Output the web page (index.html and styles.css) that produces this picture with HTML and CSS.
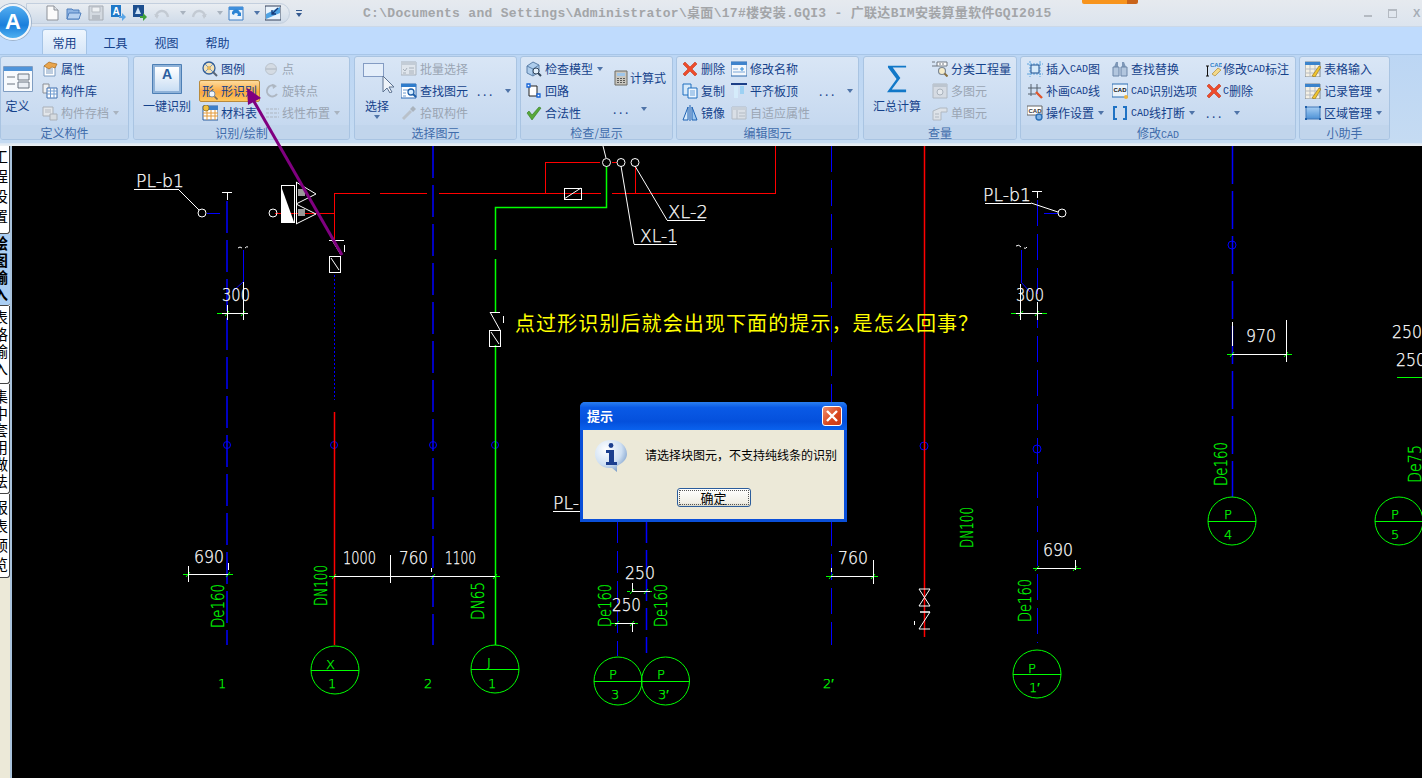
FILE: index.html
```html
<!DOCTYPE html>
<html lang="zh-CN">
<head>
  <meta charset="UTF-8">
  <title>广联达BIM安装算量软件GQI2015</title>
  <link rel="stylesheet" href="styles.css">
</head>
<body>

<!-- shared toolbar icons -->
<svg class="defs" width="0" height="0">
  <defs>
    <linearGradient id="gBlue" x1="0" y1="0" x2="0" y2="1"><stop offset="0" stop-color="#9ccbf5"/><stop offset="1" stop-color="#2f7fd0"/></linearGradient>
    <linearGradient id="gWin" x1="0" y1="0" x2="0" y2="1"><stop offset="0" stop-color="#ffffff"/><stop offset="1" stop-color="#c9def4"/></linearGradient>
    <symbol id="i-new" viewBox="0 0 16 16"><path d="M3 1h7l4 4v10H3z" fill="#fbfbfb" stroke="#8d9198"/><path d="M10 1v4h4" fill="#dfe3e8" stroke="#8d9198"/></symbol>
    <symbol id="i-open" viewBox="0 0 16 16"><path d="M1 4h5l1 1h6v9H1z" fill="#8fb4e3" stroke="#4f7fbd"/><path d="M1 14l2-6h12l-2 6z" fill="#b6d0f0" stroke="#4f7fbd"/></symbol>
    <symbol id="i-save" viewBox="0 0 16 16"><path d="M1 1h14v14H1z" fill="#d3d9e0" stroke="#a5abb3"/><path d="M4 2h8v5H4z" fill="#eef1f4" stroke="#b5bac1"/><path d="M4 10h8v5H4z" fill="#b8bec6"/></symbol>
    <symbol id="i-aout" viewBox="0 0 16 16"><path d="M1 0h10v12H1z" fill="#1f78c8"/><text x="2.500" y="10" class="ic-t ic-a">A</text><path d="M9 11h3V8l4 4-4 4v-3H9z" fill="#5aa5e6"/></symbol>
    <symbol id="i-ain" viewBox="0 0 16 16"><path d="M1 0h11v12H1z" fill="#1d4f8f"/><path d="M6 2l3 7H3z" fill="#cfe3f6"/><path d="M8 11h3V8l4 4-4 4v-3H8z" fill="#3fa03a"/></symbol>
    <symbol id="i-undo" viewBox="0 0 16 16"><path d="M2 12C2 5 12 3 14 12" fill="none" stroke="#c3cad3" stroke-width="2.400"/><path d="M0 9l5 1-2 4z" fill="#c3cad3"/></symbol>
    <symbol id="i-redo" viewBox="0 0 16 16"><path d="M14 12C14 5 4 3 2 12" fill="none" stroke="#c3cad3" stroke-width="2.400"/><path d="M16 9l-5 1 2 4z" fill="#c3cad3"/></symbol>
    <symbol id="i-sync" viewBox="0 0 16 16"><path d="M1 2h14v13H1z" fill="#eaf2fb" stroke="#3f7fc4"/><path d="M1 2h14v3H1z" fill="#3f8fdc"/><path d="M4 9a4 4 0 0 1 8-1l1-1v4H9l1-1a2 2 0 0 0-4 0z" fill="#2a83d4"/></symbol>
    <symbol id="i-fit" viewBox="0 0 16 16"><path d="M0 1h16v14H0z" fill="#e9f3fc" stroke="#33415a"/><path d="M1 9L15 2v6L1 14z" fill="#4fa3e3"/><path d="M13 3L7 9M7 5v4h4" fill="none" stroke="#153a78" stroke-width="1.300"/></symbol>

    <symbol id="i-prop" viewBox="0 0 16 16"><path d="M2 5h11v10H2z" fill="#fff" stroke="#7d9cc1"/><path d="M4 8h7M4 10h7M4 12h7" stroke="#7d9cc1"/><path d="M2 5l5-4 3 1 5 1-2 4-3-1-3 2z" fill="#e9a54d" stroke="#a86a1c" stroke-width=".7"/></symbol>
    <symbol id="i-lib" viewBox="0 0 16 16"><path d="M1 1h6v9H1z" fill="#eef0f2" stroke="#8a8f96"/><path d="M5 5h10v10H5z" fill="#fff" stroke="#3e6fae"/><path d="M5 8h10M5 11h10M8.500 5v10M12 5v10" stroke="#6f9bd0"/></symbol>
    <symbol id="i-store" viewBox="0 0 16 16"><path d="M1 2h10v9H1z" fill="#e2e6ea" stroke="#a9afb7"/><path d="M3 5h6M3 7h6" stroke="#b5bac2"/><path d="M8 9h7v6H8z" fill="#d6dbe0" stroke="#a9afb7"/></symbol>
    <symbol id="i-legend" viewBox="0 0 16 16"><circle cx="7" cy="7" r="6" fill="#f3e2b8" stroke="#315d98" stroke-width="1.300"/><path d="M3 3l8 8M11 3l-8 8" stroke="#6f94c4"/><circle cx="7" cy="7" r="2" fill="#e7b65c"/><path d="M11 11l4 4" stroke="#5a6676" stroke-width="2"/></symbol>
    <symbol id="i-mag" viewBox="0 0 10 10"><circle cx="4" cy="4" r="3" fill="#eef4fa" stroke="#7a8ea5"/><path d="M6.500 6.500L9.500 9.500" stroke="#7a6a55" stroke-width="1.600"/></symbol>
    <symbol id="i-table" viewBox="0 0 16 16"><path d="M1 1h15v14H1z" fill="#fff" stroke="#2d5f9e"/><path d="M1 1h15v4H1z" fill="#3d7fc8"/><path d="M1 8h15M1 11h15M5 5v10M9 5v10M13 5v10" stroke="#e39a3b"/><circle cx="4" cy="3" r="3" fill="#f0c040" stroke="#8a6a1e" stroke-width=".7"/></symbol>
    <symbol id="i-dot" viewBox="0 0 16 16"><circle cx="6" cy="8" r="5.500" fill="#d4dbe3" stroke="#b9c2cc"/><path d="M1 8h10" stroke="#aab3be"/></symbol>
    <symbol id="i-rot" viewBox="0 0 16 16"><path d="M10 3a5.500 5.500 0 1 0 2 8" fill="none" stroke="#aeb7c2" stroke-width="2"/><path d="M7 1l5 2-4 3z" fill="#aeb7c2"/></symbol>
    <symbol id="i-linear" viewBox="0 0 16 16"><path d="M1 4h13M1 8h13M1 12h13" stroke="#adb6c1" stroke-dasharray="3 1"/></symbol>
    <symbol id="i-batch" viewBox="0 0 16 16"><path d="M0 1h15v13H0z" fill="#dfe5ec" stroke="#aab3bd"/><path d="M0 1h15v3H0z" fill="#c3ccd6"/><path d="M2 8l2 2 2-3M8 7h5M2 12h3M8 10h5M8 12h5" fill="none" stroke="#a7b0ba"/></symbol>
    <symbol id="i-find" viewBox="0 0 16 16"><path d="M0 1h15v14H0z" fill="#fff" stroke="#2a69b3"/><path d="M0 1h15v3H0z" fill="#2f7ccb"/><path d="M2 7h5M2 10h3M2 13h3" stroke="#6c9ad0"/><circle cx="10" cy="9" r="3" fill="#d6ecff" stroke="#1d5ea8" stroke-width="1.300"/><path d="M12 11l3 3" stroke="#1d5ea8" stroke-width="2"/></symbol>
    <symbol id="i-pick" viewBox="0 0 16 16"><path d="M2 14l8-8" stroke="#b9c1ca" stroke-width="3"/><path d="M9 4l3-3 3 3-3 3z" fill="#aab3bd"/></symbol>
    <symbol id="i-model" viewBox="0 0 16 16"><path d="M1 5l6-4 6 3v7l-6 4-6-3z" fill="#aecdec" stroke="#5a7fa8"/><path d="M1 5l6 3 6-4M7 8v7" fill="none" stroke="#5a7fa8"/><circle cx="10" cy="10" r="3" fill="#e2f0fc" stroke="#33465c"/><path d="M12 12l3 3" stroke="#33465c" stroke-width="2"/></symbol>
    <symbol id="i-loop" viewBox="0 0 16 16"><path d="M3 3h8v10H3z" fill="#fff" stroke="#222"/><path d="M1 1h3v3H1zM11 11h3v3h-3z" fill="#fff" stroke="#1463d8" stroke-width="1.300"/></symbol>
    <symbol id="i-ok" viewBox="0 0 16 16"><path d="M1 8l2-2 3 4 7-8 2 1-9 12z" fill="#58a83a" stroke="#2f7a1d" stroke-width=".6"/></symbol>
    <symbol id="i-calc" viewBox="0 0 16 16"><path d="M2 1h12v14H2z" fill="#c9c7c0" stroke="#6d6a63"/><path d="M4 3h8v3H4z" fill="#9fc6ea"/><path d="M4 8h2v1H4zM7 8h2v1H7zM10 8h2v1h-2zM4 10h2v1H4zM7 10h2v1H7zM10 10h2v1h-2zM4 12h2v1H4zM7 12h2v1H7zM10 12h2v1h-2z" fill="#5a5a58"/></symbol>
    <symbol id="i-del" viewBox="0 0 16 16"><path d="M1 3l2-2 5 5 5-5 2 2-5 5 5 5-2 2-5-5-5 5-2-2 5-5z" fill="#ee4b2b" stroke="#c03a20" stroke-width=".6"/></symbol>
    <symbol id="i-copy" viewBox="0 0 16 16"><path d="M1 1h8v11H1z" fill="#d6e9fa" stroke="#1e6fbf"/><path d="M6 5h9v10H6z" fill="#eef6fe" stroke="#1e6fbf"/><path d="M8 8h5M8 10h5M8 12h5" stroke="#6ba3dc"/></symbol>
    <symbol id="i-mirror" viewBox="0 0 16 16"><path d="M6 2L1 15h5z" fill="#d6e9fa" stroke="#1e62b3"/><path d="M10 2l5 13h-5z" fill="#9cc7ef" stroke="#1e62b3"/><path d="M8 0v16" stroke="#1e62b3"/></symbol>
    <symbol id="i-rename" viewBox="0 0 16 16"><path d="M0 1h16v14H0z" fill="#f4f8fc" stroke="#2f6aae"/><path d="M0 1h16v3H0z" fill="#3e83cc"/><path d="M2 8h5M2 11h12" stroke="#7aa6d8"/><path d="M9 8h4M11 6v4" stroke="#2f8ad8"/></symbol>
    <symbol id="i-align" viewBox="0 0 16 16"><path d="M0 1h16" stroke="#1c3f87" stroke-width="2"/><path d="M3 3h4v12H3z" fill="#d5ecfb"/><path d="M9 3h4v8H9z" fill="#9dd1f3"/></symbol>
    <symbol id="i-adapt" viewBox="0 0 16 16"><path d="M1 2h14v12H1z" fill="#d9dfe6" stroke="#b3bbc4"/><path d="M1 2h14v3H1z" fill="#c8d0d9"/><path d="M6 5v9M8 8h6M8 11h6" stroke="#b3bbc4"/></symbol>
    <symbol id="i-class" viewBox="0 0 16 16"><path d="M0 1h3M5 1h10v4H5z" fill="#fff" stroke="#6f7680"/><path d="M0 5h5M8 2v2M11 2v2" stroke="#6f7680"/><circle cx="10" cy="10" r="3.500" fill="#f6ecc9" stroke="#7c8794" stroke-width="1.200"/><path d="M12.500 12.500l3 3" stroke="#8a6f3d" stroke-width="2"/></symbol>
    <symbol id="i-multi" viewBox="0 0 16 16"><path d="M1 1h14v14H1z" fill="#d5dbe3" stroke="#b0b8c1"/><path d="M1 1h14v3H1z" fill="#bcc5cf"/><circle cx="8" cy="9" r="3" fill="#e3e8ee" stroke="#aab3bd"/></symbol>
    <symbol id="i-single" viewBox="0 0 16 16"><path d="M1 6l7-3h7v4H9v8H1z" fill="#dde2e8" stroke="#b0b8c1"/><path d="M3 9h4M3 12h4" stroke="#b0b8c1"/></symbol>
    <symbol id="i-insert" viewBox="0 0 16 16"><path d="M3 0v16M13 0v16M0 3h16M0 13h16" stroke="#5ea5de" stroke-dasharray="2 1"/><path d="M4 4h8v8H4z" fill="#d6eafa" stroke="#1b4f8f"/></symbol>
    <symbol id="i-patch" viewBox="0 0 16 16"><path d="M4 1v12M10 1v8M1 5h13M1 11h8" stroke="#55606c"/><path d="M9 9l6 6" stroke="#e0552b" stroke-width="2.400"/></symbol>
    <symbol id="i-setup" viewBox="0 0 16 16"><path d="M0 1h15v9H0z" fill="#fff" stroke="#666"/><text x="1.500" y="8" class="ic-t ic-cad">CAD</text><circle cx="12" cy="12" r="3" fill="#7fb3e6" stroke="#2a6fb5" stroke-width="1.400"/></symbol>
    <symbol id="i-binoc" viewBox="0 0 16 16"><path d="M2 6l2-5h2v5zM14 6l-2-5h-2v5z" fill="#7d97b8"/><path d="M1 6h6v9H1zM9 6h6v9H9z" fill="#b2c6de" stroke="#6c86a8"/></symbol>
    <symbol id="i-cadopt" viewBox="0 0 16 16"><path d="M0 1h16v13H0z" fill="#eaf3fb" stroke="#2b6cb2"/><text x="1.500" y="9" class="ic-t ic-cad ic-dark">CAD</text><circle cx="14" cy="14" r="2" fill="#f0b43a"/></symbol>
    <symbol id="i-brk" viewBox="0 0 16 16"><path d="M5 2H2v12h3M11 2h3v12h-3" fill="none" stroke="#1f72c4" stroke-width="2"/></symbol>
    <symbol id="i-cadmark" viewBox="0 0 16 16"><text x="4" y="6" class="ic-t ic-cad ic-blue">CAD</text><path d="M0 5h3M1.500 5v10M0 15h3" stroke="#111"/><path d="M6 13l6-6 3 2-6 6z" fill="#f3d98a" stroke="#b08a35" stroke-width=".7"/></symbol>
    <symbol id="i-sheet" viewBox="0 0 16 16"><path d="M0 1h15v15H0z" fill="#f4f0e4" stroke="#7d8792"/><path d="M0 1h15v3H0z" fill="#3a83cc"/><path d="M0 8h15M0 12h15M5 4v12M10 4v12" stroke="#b7bcc3"/><path d="M7 15L14 5l2 1-6 10z" fill="#f0c52e" stroke="#8a6a1e" stroke-width=".6"/></symbol>
    <symbol id="i-region" viewBox="0 0 16 16"><path d="M1 2h14v12H1z" fill="url(#gBlue)" stroke="#1f5fa8" opacity=".8"/><path d="M0 1h2v2H0zM14 1h2v2h-2zM0 13h2v2H0zM14 13h2v2h-2z" fill="#1f5fa8"/></symbol>
  </defs>
</svg>

<div class="app">

  <header class="titlebar">
    <div class="qat">
      <svg class="qi q-first"><use href="#i-new"/></svg>
      <svg class="qi"><use href="#i-open"/></svg>
      <svg class="qi"><use href="#i-save"/></svg>
      <svg class="qi"><use href="#i-aout"/></svg>
      <svg class="qi"><use href="#i-ain"/></svg>
      <svg class="qi"><use href="#i-undo"/></svg><i class="caret grey q-caret"></i>
      <svg class="qi"><use href="#i-redo"/></svg><i class="caret grey q-caret"></i>
      <svg class="qi"><use href="#i-sync"/></svg><i class="caret q-caret"></i>
      <svg class="qi"><use href="#i-fit"/></svg>
    </div>
    <i class="qat-more"></i>
    <div class="doc-title">C:\Documents and Settings\Administrator\桌面\17#楼安装.GQI3 - 广联达BIM安装算量软件GQI2015</div>
    <div class="winbtns">
      <span class="win-min"></span>
      <span class="win-max"></span>
      <span class="win-close">X</span>
    </div>
  </header>

  <nav class="tabs">
    <span class="tab on">常用</span>
    <span class="tab">工具</span>
    <span class="tab">视图</span>
    <span class="tab">帮助</span>
  </nav>

  <section class="ribbon">

    <div class="grp g1">
      <div class="grp-body">
        <div class="big w-def">
          <svg class="big-ico def-ico" viewBox="0 0 30 26"><path d="M.5.5h29v25H.5z" fill="#f7fafd" stroke="#7f9dc2"/><path d="M1 1h28v4H1z" fill="#4f94da"/><path d="M4 11h8M4 18h8" stroke="#6a7480"/><path d="M15 8h11v6H15zM15 16h11v6H15z" fill="#e9eef4" stroke="#6a7480"/></svg>
          <span class="big-label">定义</span>
        </div>
        <div class="col ml8">
          <div class="row"><svg class="ico"><use href="#i-prop"/></svg>属性</div>
          <div class="row"><svg class="ico"><use href="#i-lib"/></svg>构件库</div>
          <div class="row off"><svg class="ico"><use href="#i-store"/></svg>构件存档<i class="caret grey"></i></div>
        </div>
      </div>
      <div class="grp-name">定义构件</div>
    </div>

    <div class="grp g2">
      <div class="grp-body">
        <div class="big w-one">
          <svg class="big-ico a-ico" viewBox="0 0 30 30"><path d="M.5.5h29v29H.5z" fill="#8fb2d8" stroke="#4d7fb5"/><path d="M3 3h24v24H3z" fill="url(#gWin)"/><text x="10" y="15" class="ic-t ic-big-a">A</text></svg>
          <span class="big-label">一键识别</span>
        </div>
        <div class="col w65">
          <div class="row pl2"><svg class="ico"><use href="#i-legend"/></svg>图例</div>
          <div class="row hot"><span class="hot-ico">形<svg class="hot-mag"><use href="#i-mag"/></svg></span>形识别</div>
          <div class="row pl2"><svg class="ico"><use href="#i-table"/></svg>材料表</div>
        </div>
        <div class="col tight">
          <div class="row off"><svg class="ico"><use href="#i-dot"/></svg>点</div>
          <div class="row off"><svg class="ico"><use href="#i-rot"/></svg>旋转点</div>
          <div class="row off"><svg class="ico"><use href="#i-linear"/></svg>线性布置<i class="caret grey"></i></div>
        </div>
      </div>
      <div class="grp-name">识别/绘制</div>
    </div>

    <div class="grp g3">
      <div class="grp-body">
        <div class="big w-sel">
          <svg class="big-ico sel-ico" viewBox="0 0 32 30"><path d="M.5.5h20v13H.5z" fill="#e4eefa" stroke="#2a4f8f" stroke-dasharray="1 1"/><path d="M20 13v16l4-4 3 5 2-1-3-5h5z" fill="#eef3f9" stroke="#5c7290"/></svg>
          <span class="big-label">选择</span>
          <i class="caret big-caret"></i>
        </div>
        <div class="col ml2">
          <div class="row off"><svg class="ico"><use href="#i-batch"/></svg>批量选择</div>
          <div class="row"><svg class="ico"><use href="#i-find"/></svg>查找图元<span class="dots">. . .</span><i class="caret far"></i></div>
          <div class="row off"><svg class="ico"><use href="#i-pick"/></svg>拾取构件</div>
        </div>
      </div>
      <div class="grp-name">选择图元</div>
    </div>

    <div class="grp g4">
      <div class="grp-body">
        <div class="col pl5 w92">
          <div class="row"><svg class="ico"><use href="#i-model"/></svg>检查模型<i class="caret"></i></div>
          <div class="row"><svg class="ico"><use href="#i-loop"/></svg>回路</div>
          <div class="row"><svg class="ico"><use href="#i-ok"/></svg>合法性</div>
        </div>
        <div class="col tight spaced">
          <div class="row"><svg class="ico"><use href="#i-calc"/></svg>计算式</div>
          <div class="row"><span class="dots d0">. . .</span><i class="caret far"></i></div>
        </div>
      </div>
      <div class="grp-name">检查/显示</div>
    </div>

    <div class="grp g5">
      <div class="grp-body">
        <div class="col pl5 w54">
          <div class="row"><svg class="ico"><use href="#i-del"/></svg>删除</div>
          <div class="row"><svg class="ico"><use href="#i-copy"/></svg>复制</div>
          <div class="row"><svg class="ico"><use href="#i-mirror"/></svg>镜像</div>
        </div>
        <div class="col">
          <div class="row"><svg class="ico"><use href="#i-rename"/></svg>修改名称</div>
          <div class="row"><svg class="ico"><use href="#i-align"/></svg>平齐板顶<span class="dots d21">. . .</span><i class="caret far"></i></div>
          <div class="row off"><svg class="ico"><use href="#i-adapt"/></svg>自适应属性</div>
        </div>
      </div>
      <div class="grp-name">编辑图元</div>
    </div>

    <div class="grp g6">
      <div class="grp-body">
        <div class="big w-sum">
          <svg class="big-ico sum-ico" viewBox="0 0 22 28"><path d="M1 0h19v2H6l8 11-9 12h15v3H0l10-14L1 2z" fill="#1278c8"/></svg>
          <span class="big-label">汇总计算</span>
        </div>
        <div class="col ml2">
          <div class="row"><svg class="ico"><use href="#i-class"/></svg>分类工程量</div>
          <div class="row off"><svg class="ico"><use href="#i-multi"/></svg>多图元</div>
          <div class="row off"><svg class="ico"><use href="#i-single"/></svg>单图元</div>
        </div>
      </div>
      <div class="grp-name">查量</div>
    </div>

    <div class="grp g7">
      <div class="grp-body">
        <div class="col pl6 w91">
          <div class="row"><svg class="ico"><use href="#i-insert"/></svg>插入<span class="cad">CAD</span>图</div>
          <div class="row"><svg class="ico"><use href="#i-patch"/></svg>补画<span class="cad">CAD</span>线</div>
          <div class="row"><svg class="ico"><use href="#i-setup"/></svg>操作设置<i class="caret"></i></div>
        </div>
        <div class="col w94">
          <div class="row"><svg class="ico"><use href="#i-binoc"/></svg>查找替换</div>
          <div class="row"><svg class="ico"><use href="#i-cadopt"/></svg><span class="cad">CAD</span>识别选项</div>
          <div class="row"><svg class="ico"><use href="#i-brk"/></svg><span class="cad">CAD</span>线打断<i class="caret"></i></div>
        </div>
        <div class="col tight">
          <div class="row"><svg class="ico"><use href="#i-cadmark"/></svg>修改<span class="cad">CAD</span>标注</div>
          <div class="row"><svg class="ico"><use href="#i-del"/></svg><span class="cad">C</span>删除</div>
          <div class="row"><span class="dots d0">. . .</span><i class="caret far"></i></div>
        </div>
      </div>
      <div class="grp-name">修改<span class="cad">CAD</span></div>
    </div>

    <div class="grp g8">
      <div class="grp-body">
        <div class="col pl5">
          <div class="row"><svg class="ico"><use href="#i-sheet"/></svg>表格输入</div>
          <div class="row"><svg class="ico"><use href="#i-sheet"/></svg>记录管理<i class="caret"></i></div>
          <div class="row"><svg class="ico"><use href="#i-region"/></svg>区域管理<i class="caret"></i></div>
        </div>
      </div>
      <div class="grp-name">小助手</div>
    </div>

  </section>
  <div class="ribbon-foot"></div>

  <main class="workspace">
    <aside class="sidetabs">
      <div class="stab s1"><span>工程设置</span></div>
      <div class="stab s2 on"><span>绘图输入</span></div>
      <div class="stab s3"><span>表格输入</span></div>
      <div class="stab s4"><span>集中套用做法</span></div>
      <div class="stab s5"><span>报表预览</span></div>
      <div class="stab-rest"></div>
    </aside>

    <!-- drawing area, coordinates are window pixels -->
    <svg class="drawing" viewBox="12 146 1410 632" shape-rendering="crispEdges">
      <!-- risers -->
      <g fill="none" stroke="#0000ff">
        <path class="b2" d="M227 201V645" stroke-dasharray="32 7"/>
        <path class="b2" d="M433 146V645" stroke-dasharray="32 7"/>
        <path class="b2" d="M1232.500 146V497" stroke-dasharray="38 7"/>
        <path d="M334.500 275V400" stroke-dasharray="2 2"/>
        <path d="M617.500 521V656" stroke-dasharray="22 8"/>
        <path class="b2" d="M646.500 521V653" stroke-dasharray="22 7"/>
        <path d="M831.500 146V645" stroke-dasharray="26 8"/>
        <path d="M1037.500 200V643" stroke-dasharray="26 8"/>
        <path d="M207 213H220M1044 213H1058M243.500 250V282M1021.500 250V282"/>
        <circle cx="227" cy="445" r="3.500"/><circle cx="334" cy="445" r="3.500"/>
        <circle cx="433" cy="445" r="3.500"/><circle cx="495" cy="445" r="3.500"/>
        <circle cx="924" cy="446" r="4"/><circle cx="1037" cy="449" r="4"/>
        <circle cx="1232" cy="245" r="4"/>
      </g>
      <path class="slant" d="M243 282L232 292M1021 282L1030 292" fill="none" stroke="#0000ff"/>

      <g fill="none" stroke="#ff0000">
        <path class="b2" d="M334.500 412V645M924.500 146V637"/>
        <path d="M334.500 240V193.500H370M380 193.500H427M439 193.500H601M612 193.500H775.500V146"/>
        <path d="M275 213.500H334M545.500 193V162.500H600M612 162.500H617M635.500 166V193"/>
      </g>

      <g fill="none" stroke="#00ff00">
        <path class="b2" d="M606.500 166V207.500H495.500V250M495.500 259V312M495.500 345V645"/>
        <path d="M188 574.500h-5M228 574.500h5M329 576.500h5M495 576.500h5M826 576.500h5M873 576.500h5M1227 354.500h5M1286 354.500h6M1033 568.500h4M1075 568.500h6M222 313.500h-5M248 313.500h-5M1016 313.500h-5M1042 313.500h5M627 591.500h3M650 591.500h2M611 623.500h4M635 623.500h3M1397 377.500H1422"/>
      </g>
      <!-- dimension ticks -->
      <path class="slant" fill="none" stroke="#00ff00" d="M186 577l4-5M226 577l4-5M332 579l4-5M431 579l4-5M493 579l4-5M829 579l4-5M871 579l4-5M1230 357l4-5M1284 357l4-5M1035 571l4-5M1073 571l4-5M225 316l4-5M241 316l4-5M1019 316l4-5M1035 316l4-5M630 594l4-5M644 594l4-5M615 626l4-5M630 626l4-5"/>

      <!-- dimension lines -->
      <g fill="none" stroke="#fff">
        <path d="M188.500 566V582M188 574.500H228M228.500 563V570M334 576.500H495M390.500 555V583M431.500 568V572"/>
        <path d="M831 576.500H873M873.500 560V584M831.500 568V572"/>
        <path d="M222 313.500H248M243.500 282V320M227.500 305V320M1016 313.500H1042M1020.500 284V320M1037.500 302V320"/>
        <path d="M1232 354.500H1286M1286.500 320V362M1232.500 322V346"/>
        <path d="M1037 568.500H1075M1075.500 560V570"/>
        <path d="M632.500 583V591.500H650M615 623.500H635M632.500 623V632"/>
        <path d="M222 192.500H232M227.500 192V200M1032 191.500H1042M1037.500 191V198"/>
        <path d="M134 189.500H178M985 203.500H1031M553 511.500H590"/>
        <path d="M634 244.500H677M667 220.500H705M564.500 188.500H581.500V199.500H564.500Z"/>
        <circle cx="202" cy="213" r="4"/><circle cx="273" cy="213" r="4"/>
        <circle cx="1062" cy="213" r="4"/>
        <circle cx="606.500" cy="162.500" r="4"/><circle cx="621" cy="162.500" r="4"/><circle cx="635" cy="162.500" r="4"/>
      </g>
      <g class="slant" fill="none" stroke="#fff">
        <path d="M178 189L199 210M1031 203L1058 212M603 146L606 158M621 166L634 244M635 166L667 220"/>
        <path d="M564 199L581 188"/>
        <path d="M238 248q2-2 4 0M245 248q2-2 3-1M1016 246q3-2 5 1M1024 248q2 1 3-1"/>
      </g>

      <!-- equipment and valves -->
      <g fill="none" stroke="#fff">
        <path d="M281.500 185.500H294.500V222.500H281.500Z"/>
        <path d="M296.500 182V224" />
        <path class="slant" d="M296 182L316 194L296 204L316 214L296 224"/>
        <path d="M329 240.500H344M344.500 245V252M329.500 256.500H340.500V272.500H329.500Z"/>
        <path class="slant" d="M332 240L341 255M331 258L339 270"/>
        <path d="M490 312.500H500M503.500 316V323M489.500 330.500H500.500V346.500H489.500Z"/>
        <path class="slant" d="M490 312L500 330M491 332L499 344"/>
        <path class="slant" d="M919 589H930L919 606H930L919 589M930 612H920L930 612L919 629H930"/>
        <path d="M914.500 621V625"/>
      </g>
      <path class="slant" d="M281 186L294 222H281Z" fill="#fff"/>
      <path d="M298 189h7v7h-7zM298 209h7v7h-7z" fill="#999"/>

      <!-- pipe ends -->
      <g fill="none" stroke="#00ff00">
        <circle cx="335" cy="670" r="24"/><circle cx="495" cy="669" r="24"/>
        <circle cx="618" cy="681" r="24"/><circle cx="665.500" cy="681" r="24"/>
        <circle cx="1037" cy="674" r="24"/><circle cx="1232" cy="521" r="24"/>
        <circle cx="1399" cy="521" r="24"/>
      </g>
      <path d="M311 670.500H359M471 669.500H519M594 681.500H689M1013 674.500H1061M1208 521.500H1256M1375 521.500H1422" fill="none" stroke="#00ff00"/>

      <g class="cad-text white">
        <text x="136" y="187" textLength="48" lengthAdjust="spacingAndGlyphs">PL-b1</text>
        <text x="983" y="201" textLength="48" lengthAdjust="spacingAndGlyphs">PL-b1</text>
        <text x="553" y="509" textLength="48" lengthAdjust="spacingAndGlyphs">PL-b1</text>
        <text x="668" y="218" textLength="40" lengthAdjust="spacingAndGlyphs">XL-2</text>
        <text x="640" y="242" textLength="38" lengthAdjust="spacingAndGlyphs">XL-1</text>
        <text x="222" y="301" textLength="28" lengthAdjust="spacingAndGlyphs">300</text>
        <text x="1016" y="301" textLength="28" lengthAdjust="spacingAndGlyphs">300</text>
        <text x="194" y="563" textLength="30" lengthAdjust="spacingAndGlyphs">690</text>
        <text x="343" y="564" textLength="33" lengthAdjust="spacingAndGlyphs">1000</text>
        <text x="399" y="564" textLength="29" lengthAdjust="spacingAndGlyphs">760</text>
        <text x="445" y="564" textLength="31" lengthAdjust="spacingAndGlyphs">1100</text>
        <text x="625" y="579" textLength="30" lengthAdjust="spacingAndGlyphs">250</text>
        <text x="612" y="611" textLength="29" lengthAdjust="spacingAndGlyphs">250</text>
        <text x="838" y="564" textLength="30" lengthAdjust="spacingAndGlyphs">760</text>
        <text x="1043" y="556" textLength="30" lengthAdjust="spacingAndGlyphs">690</text>
        <text x="1246" y="342" textLength="30" lengthAdjust="spacingAndGlyphs">970</text>
        <text x="1392" y="338" textLength="30" lengthAdjust="spacingAndGlyphs">250</text>
        <text x="1396" y="366" textLength="30" lengthAdjust="spacingAndGlyphs">250</text>
      </g>

      <g class="cad-text green">
        <text transform="translate(224 628) rotate(-90)" textLength="44" lengthAdjust="spacingAndGlyphs">De160</text>
        <text transform="translate(327 606) rotate(-90)" textLength="41" lengthAdjust="spacingAndGlyphs">DN100</text>
        <text transform="translate(484 620) rotate(-90)" textLength="38" lengthAdjust="spacingAndGlyphs">DN65</text>
        <text transform="translate(611 627) rotate(-90)" textLength="43" lengthAdjust="spacingAndGlyphs">De160</text>
        <text transform="translate(667 627) rotate(-90)" textLength="43" lengthAdjust="spacingAndGlyphs">De160</text>
        <text transform="translate(973 548) rotate(-90)" textLength="41" lengthAdjust="spacingAndGlyphs">DN100</text>
        <text transform="translate(1031 622) rotate(-90)" textLength="43" lengthAdjust="spacingAndGlyphs">De160</text>
        <text transform="translate(1227 486) rotate(-90)" textLength="44" lengthAdjust="spacingAndGlyphs">De160</text>
        <text transform="translate(1421 483) rotate(-90)" textLength="38" lengthAdjust="spacingAndGlyphs">De75</text>
      </g>

      <g class="cad-text green small">
        <text x="218" y="688">1</text><text x="424" y="688">2</text><text x="823" y="688">2′</text>
        <text x="326" y="669">X</text><text x="328" y="688">1</text>
        <text x="487" y="667">J</text><text x="488" y="688">1</text>
        <text x="609" y="679">P</text><text x="611" y="699">3</text>
        <text x="657" y="679">P</text><text x="658" y="699">3′</text>
        <text x="1028" y="673">P</text><text x="1029" y="692">1′</text>
        <text x="1224" y="519">P</text><text x="1224" y="539">4</text>
        <text x="1391" y="519">P</text><text x="1391" y="539">5</text>
      </g>

      <text class="note" x="515" y="331">点过形识别后就会出现下面的提示，是怎么回事？</text>
    </svg>

    <div class="msgbox">
      <div class="msg-head">
        <span class="msg-title">提示</span>
        <span class="msg-close"><svg viewBox="0 0 12 12" class="msg-x"><path d="M1 1l10 10M11 1L1 11" stroke="#fff" stroke-width="2.400"/></svg></span>
      </div>
      <div class="msg-body">
        <div class="msg-line">
          <svg class="msg-icon" viewBox="0 0 32 32">
            <defs>
              <radialGradient id="gBubble" cx=".35" cy=".3" r=".8"><stop offset="0" stop-color="#ffffff"/><stop offset=".6" stop-color="#cfe0f3"/><stop offset="1" stop-color="#6e93c3"/></radialGradient>
            </defs>
            <path d="M16 0C7 0 0 6 0 14c0 8 7 14 14 14h3l5 4v-6c6-3 10-7 10-12C32 6 25 0 16 0z" fill="url(#gBubble)"/>
            <circle cx="16" cy="5.500" r="2.400" fill="#1c3f8f"/>
            <path d="M11 10h8v12h3v3H11v-3h3V13h-3z" fill="#1c3f8f"/>
          </svg>
          <span class="msg-text">请选择块图元，不支持纯线条的识别</span>
        </div>
        <button class="msg-ok">确定</button>
      </div>
    </div>
  </main>

  <!-- window decorations and pointer that sit over the bars -->
  <div class="app-orb"><span>A</span></div>
  <div class="orange-tag"></div>
  <svg class="pointer" width="360" height="270" viewBox="0 0 360 270">
    <path d="M342 255L252 98" stroke="#800080" stroke-width="3" fill="none"/>
    <path d="M247 88L261 98L248 105Z" fill="#800080"/>
  </svg>

</div>

</body>
</html>
```

FILE: styles.css
```css
html, body {
  margin: 0;
  height: 100%;
  overflow: hidden;
  background: #000;
}
body {
  font-family: "Noto Sans CJK SC", "Liberation Sans", sans-serif;
  font-size: 12px;
  color: #15428b;
}
.defs {
  position: absolute;
}
.app {
  position: relative;
  width: 1422px;
  height: 778px;
  overflow: hidden;
  display: flex;
  flex-direction: column;
}

/* title bar */
.titlebar {
  height: 27px;
  flex: none;
  display: flex;
  align-items: center;
  background: linear-gradient(#e6eaef, #dce4ee);
  border-bottom: 1px solid #cbd8e8;
  box-sizing: border-box;
}
.qat {
  margin-left: 26px;
  width: 264px;
  height: 21px;
  box-sizing: border-box;
  padding-left: 17px;
  display: flex;
  align-items: center;
  background: linear-gradient(#e9edf2, #cfdbe9);
  border: 1px solid #c3cfde;
  border-radius: 0 11px 11px 0;
}
.qi {
  width: 16px;
  height: 16px;
  margin-right: 6px;
  flex: none;
}
.q-caret {
  margin: 0 5px 0 3px;
}
.qat-more {
  width: 6px;
  height: 7px;
  margin-left: 6px;
  background: linear-gradient(#33598f 0 1px, transparent 1px 3px, #33598f 3px 3.5px, transparent 3.5px);
  border-bottom: 0;
  position: relative;
}
.qat-more::after {
  content: "";
  position: absolute;
  left: 0;
  top: 3px;
  border: 3px solid transparent;
  border-top: 4px solid #33598f;
  border-bottom: 0;
}
.doc-title {
  margin-left: 61px;
  width: 710px;
  font: bold 13px/16px "Liberation Mono", "Noto Sans CJK SC", monospace;
  letter-spacing: .3px;
  color: #a3a5a8;
  white-space: nowrap;
  padding-top: 1px;
}
.winbtns {
  margin-left: auto;
  display: flex;
  align-items: center;
  gap: 16px;
  color: #a6adb6;
}
.win-min {
  width: 8px;
  height: 2px;
  margin-top: 6px;
  background: #b4bac2;
}
.win-max {
  width: 7px;
  height: 6px;
  border: 1px solid #b4bac2;
  border-top-width: 2px;
}
.win-close {
  width: 9px;
  font: bold 11px "Liberation Sans", sans-serif;
  overflow: hidden;
}

/* tab strip */
.tabs {
  height: 27px;
  flex: none;
  display: flex;
  align-items: flex-end;
  padding-left: 42px;
  box-sizing: border-box;
  background: #bfdbfd;
}
.tab {
  width: 51px;
  height: 25px;
  line-height: 27px;
  text-align: center;
  box-sizing: border-box;
  padding-right: 6px;
}
.tab.on {
  padding-right: 0;
  width: 45px;
  margin-right: 6px;
  background: linear-gradient(#eef6fe, #d6e6f8);
  border: 1px solid #a5c4e6;
  border-bottom: 0;
  border-radius: 3px 3px 0 0;
  line-height: 25px;
}

/* ribbon */
.ribbon {
  height: 89px;
  flex: none;
  box-sizing: border-box;
  padding-top: 1px;
  display: flex;
  background: linear-gradient(#bcd6f4, #c5dbf2);
  border-top: 1px solid #a8c6e8;
}
.ribbon-foot {
  height: 3px;
  flex: none;
  background: linear-gradient(#d7e5f4, #eef1f2);
}
.grp {
  height: 84px;
  flex: none;
  box-sizing: border-box;
  border: 1px solid #a9c4e2;
  border-radius: 3px;
  background: linear-gradient(#d9e6f6, #c2d6ee);
  overflow: hidden;
}
.g1 { width: 129px; margin-right: 4px; }
.g2 { width: 217px; margin-right: 4px; }
.g3 { width: 163px; margin-right: 3px; }
.g4 { width: 153px; margin-right: 3px; }
.g5 { width: 183px; margin-right: 4px; }
.g6 { width: 154px; margin-right: 3px; }
.g7 { width: 276px; margin-right: 3px; }
.g8 { width: 91px; }
.grp-body {
  height: 68px;
  display: flex;
}
.grp-name {
  height: 14px;
  line-height: 16px;
  text-align: center;
  color: #3f6cab;
  background: #c1d5ec;
}

.col {
  display: flex;
  flex-direction: column;
  flex: none;
  padding-top: 1px;
}
.ml2 { margin-left: 2px; }
.ml8 { margin-left: 8px; }
.pl5 { padding-left: 5px; }
.pl6 { padding-left: 6px; }
.pl2 { padding-left: 2px; }
.w65 { width: 65px; }
.w54 { width: 49px; }
.w92 { width: 87px; }
.w91 { width: 85px; }
.w94 { width: 94px; }
.row {
  height: 22px;
  display: flex;
  align-items: center;
  white-space: nowrap;
  line-height: 22px;
}
.ico {
  width: 16px;
  height: 16px;
  flex: none;
  margin-right: 3px;
}
.tight .ico {
  margin-right: 1px;
}
.off {
  color: #9aa5b3;
}
.spaced {
  padding-top: 10px;
  gap: 9px;
}
.caret {
  display: inline-block;
  width: 0;
  height: 0;
  margin-left: 4px;
  border-left: 3.5px solid transparent;
  border-right: 3.5px solid transparent;
  border-top: 4px solid #4f74a8;
}
.caret.grey {
  border-top-color: #a9b3bf;
}
.caret.far {
  margin-left: 8px;
}
.dots {
  margin-left: 9px;
  width: 20px;
  line-height: 14px;
}
.d0 { margin-left: 0; }
.d21 { margin-left: 21px; }
.cad {
  font: 10px "Liberation Mono", monospace;
}

/* large buttons */
.big {
  flex: none;
  display: flex;
  flex-direction: column;
  align-items: center;
  position: relative;
}
.w-def { width: 33px; }
.w-one { width: 66px; }
.w-sel { width: 44px; }
.w-sum { width: 66px; }
.big-ico {
  flex: none;
}
.def-ico { width: 30px; height: 26px; margin-top: 9px; }
.a-ico { width: 30px; height: 30px; margin-top: 7px; }
.sel-ico { width: 32px; height: 30px; margin-top: 6px; margin-left: 4px; }
.sum-ico { width: 21px; height: 28px; margin-top: 8px; }
.big-label {
  position: absolute;
  top: 40px;
  line-height: 18px;
  white-space: nowrap;
}
.big-caret {
  position: absolute;
  top: 58px;
  margin: 0;
}

/* hovered command */
.hot {
  margin-left: -1px;
  width: 61px;
  box-sizing: border-box;
  border: 1px solid #b98a3c;
  border-radius: 2px;
  background: linear-gradient(#fedb9c, #fba93f 55%, #fec85f);
  padding-left: 2px;
}
.hot-ico {
  position: relative;
  width: 19px;
  flex: none;
}
.hot-mag {
  position: absolute;
  left: 6px;
  top: 10px;
  width: 10px;
  height: 10px;
}

/* left side tabs */
.workspace {
  flex: 1;
  display: flex;
  position: relative;
  min-height: 0;
}
.sidetabs {
  width: 12px;
  flex: none;
  display: flex;
  flex-direction: column;
  box-sizing: border-box;
  border-right: 2px solid #a9c3dc;
  background: #fff;
  color: #000;
  overflow: hidden;
}
.stab {
  flex: none;
  width: 10px;
  box-sizing: border-box;
  overflow: hidden;
  border-bottom: 1px solid #444;
  border-right: 1px solid #444;
  border-bottom-right-radius: 3px;
}
.stab span {
  display: block;
  margin-left: -7px;
  writing-mode: vertical-rl;
  text-orientation: upright;
  font-size: 15px;
  line-height: 15px;
  white-space: nowrap;
}
.stab.on {
  background: #a9cdf2;
  border-right: 0;
}
.s1 { height: 88px; padding-top: 3px; }
.s1 span { letter-spacing: 5px; }
.s2 { height: 72px; padding-top: 2px; font-weight: 700; }
.s2 span { letter-spacing: 2px; }
.s3 { height: 78px; padding-top: 4px; }
.s3 span { letter-spacing: 2px; }
.s4 { height: 110px; padding-top: 5px; }
.s4 span { letter-spacing: 2px; }
.s5 { height: 84px; padding-top: 6px; }
.s5 span { letter-spacing: 4px; }
.stab-rest {
  flex: 1;
  background: #ece9d8;
  background-image: radial-gradient(#fff 25%, transparent 30%);
  background-size: 2px 2px;
}

/* cad sheet */
.drawing {
  flex: 1;
  height: 632px;
  display: block;
  background: #000;
}
.b2 {
  stroke-width: 1.5;
  shape-rendering: auto;
}
.slant, .drawing circle {
  shape-rendering: auto;
}
.cad-text text {
  font-family: "DejaVu Sans", "Liberation Sans", sans-serif;
  font-weight: 200;
  font-size: 17px;
  stroke-width: .25;
  shape-rendering: auto;
}
.cad-text.white { fill: #fff; stroke: #fff; }
.cad-text.green { fill: #00ff00; stroke: #00ff00; }
.cad-text.small text { font-size: 13px; }
.note {
  font-family: "Noto Sans CJK SC", sans-serif;
  font-size: 20px;
  letter-spacing: 1.1px;
  fill: #ffff00;
}

/* message box */
.msgbox {
  position: absolute;
  left: 580px;
  top: 256px;
  width: 267px;
  height: 120px;
  box-sizing: border-box;
  display: flex;
  flex-direction: column;
  border-radius: 5px 5px 0 0;
  background: #0a4fd8;
  padding: 0 3px 3px;
}
.msg-head {
  height: 28px;
  flex: none;
  display: flex;
  align-items: center;
  justify-content: space-between;
  margin: 0 -3px;
  padding: 0 5px 0 7px;
  border-radius: 5px 5px 0 0;
  background: linear-gradient(#2a7ff0, #0a5ae6 20%, #0450dc 70%, #0a62ee);
}
.msg-title {
  color: #fff;
  font-weight: 700;
  font-size: 13px;
  padding-bottom: 2px;
}
.msg-close {
  width: 20px;
  height: 20px;
  box-sizing: border-box;
  border: 1px solid #fff;
  border-radius: 3px;
  background: linear-gradient(135deg, #ee9070, #d8451d 60%, #c83a18);
  display: flex;
  align-items: center;
  justify-content: center;
}
.msg-x {
  width: 12px;
  height: 12px;
}
.msg-body {
  flex: 1;
  background: #ece9d8;
  display: flex;
  flex-direction: column;
  align-items: center;
  color: #000;
}
.msg-line {
  align-self: stretch;
  display: flex;
  align-items: center;
  padding: 6px 0 0 12px;
  height: 40px;
}
.msg-icon {
  width: 32px;
  height: 32px;
  flex: none;
  margin-right: 18px;
}
.msg-text {
  white-space: nowrap;
  font-size: 12px;
  margin-bottom: 4px;
}
.msg-ok {
  margin-top: 12px;
  width: 74px;
  height: 19px;
  padding: 0;
  border: 1px solid #2b5d9c;
  border-radius: 3px;
  outline: 1px dotted #555;
  outline-offset: -3px;
  background: linear-gradient(#ffffff, #f0efe6 80%, #d9d6c6);
  font: 13px/16px "Noto Sans CJK SC", sans-serif;
  color: #000;
}

/* application button, top right tag and arrow on top of the bars */
.app-orb {
  position: absolute;
  left: -5px;
  top: 4px;
  width: 36px;
  height: 36px;
  box-sizing: border-box;
  border-radius: 50%;
  border: 2px solid #f1f5fa;
  box-shadow: 0 0 0 1px #9fb4cc;
  background: linear-gradient(#55aef0, #1a7fdc 60%, #4fb0f0);
  display: flex;
  align-items: center;
  justify-content: center;
}
.app-orb span {
  color: #fff;
  font: bold 22px "Liberation Sans", sans-serif;
}
.orange-tag {
  position: absolute;
  left: 1082px;
  top: 0;
  width: 56px;
  height: 4px;
  border-radius: 0 0 2px 2px;
  background: linear-gradient(90deg, #f7941d 80%, #c9641a 80%);
}
.pointer {
  position: absolute;
  left: 0;
  top: 0;
  pointer-events: none;
}

/* text used inside icons */
.ic-t {
  font-family: "Liberation Sans", sans-serif;
  font-weight: 700;
}
.ic-a { font-size: 10px; fill: #fff; }
.ic-big-a { font-size: 14px; fill: #2a5ea0; }
.ic-cad { font-size: 6px; fill: #333; }
.ic-dark { fill: #111; }
.ic-blue { fill: #2a7cc8; }
```
